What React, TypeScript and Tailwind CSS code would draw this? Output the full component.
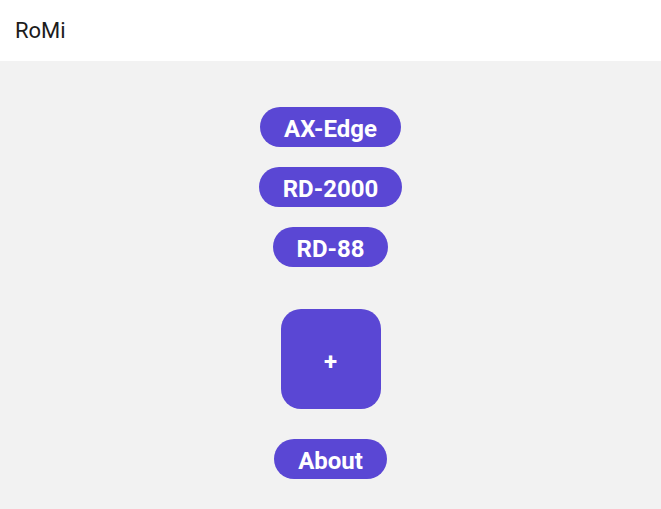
const devices = ['AX-Edge', 'RD-2000', 'RD-88'];

function Pill({ label }: { label: string }) {
  return (
    <button className="flex h-10 items-center rounded-full bg-[#5a47d4] px-6 pt-[3px] text-[24px] font-bold text-white">
      {label}
    </button>
  );
}

export default function App() {
  return (
    <div className="flex h-[509px] flex-col bg-[#f2f2f2] font-['Roboto',sans-serif]">
      <header className="flex h-[61px] items-center bg-white px-[15px]">
        <span className="text-[22px] text-[#1c1c1c]">RoMi</span>
      </header>

      <main className="flex flex-col items-center pt-[46px]">
        <div className="flex flex-col items-center gap-5">
          {devices.map((d) => (
            <Pill key={d} label={d} />
          ))}
        </div>

        <button className="mt-[42px] flex h-[100px] w-[100px] items-center justify-center rounded-[20px] bg-[#5a47d4] pt-1.5 text-[24px] font-bold text-white">
          +
        </button>

        <div className="mt-[30px]">
          <Pill label="About" />
        </div>
      </main>
    </div>
  );
}
